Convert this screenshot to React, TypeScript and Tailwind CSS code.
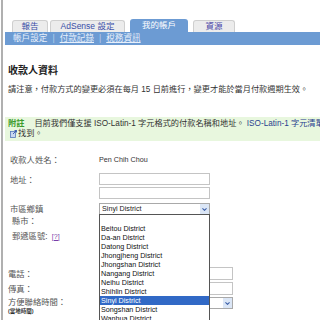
import { ChevronDown } from 'lucide-react';

const districts = [
  '',
  'Beitou District',
  'Da-an District',
  'Datong District',
  'Jhongjheng District',
  'Jhongshan District',
  'Nangang District',
  'Neihu District',
  'Shihlin District',
  'Sinyi District',
  'Songshan District',
  'Wanhua District',
  'Wenshan District',
];

function SelectBox({ value, width }: { value: string; width: string }) {
  return (
    <div className={`flex h-[12px] items-center border border-[#a9a9a9] bg-white ${width}`}>
      <span className="flex-1 pl-[2px] text-[7.2px] leading-none text-[#222]">{value}</span>
      <span className="flex h-[10px] w-[9px] items-center justify-center bg-[#dbe6f6]">
        <ChevronDown className="h-[7px] w-[7px] text-[#3b5fa8]" strokeWidth={3.5} />
      </span>
    </div>
  );
}

function Label({ children }: { children: React.ReactNode }) {
  return <div className="w-[94px] shrink-0 pl-[5px] text-[8.3px] text-[#555]">{children}</div>;
}

export default function App() {
  return (
    <div className="h-[320px] w-[320px] overflow-hidden bg-white font-['Liberation_Sans','Noto_Sans_CJK_TC',sans-serif]">
      <div className="ml-[1px] h-full border-l-2 border-[#b0b0b0] pl-[2px] pt-[19px]">
        {/* Tabs */}
        <div className="flex h-[13px] items-end pl-[7px] text-[8.5px] leading-none">
          <div className="flex h-[12px] w-[36px] items-center justify-center rounded-t-[3px] border border-b-0 border-[#cfcfcf] bg-[#ececec] text-[#3a4ea8]">報告</div>
          <div className="ml-[2px] flex h-[12px] w-[75px] items-center justify-center rounded-t-[3px] border border-b-0 border-[#cfcfcf] bg-[#ececec] text-[#3a4ea8]">AdSense 設定</div>
          <div className="ml-[5px] flex h-[13px] w-[58px] items-center justify-center rounded-t-[3px] bg-[#6c9bd3] text-white">我的帳戶</div>
          <div className="ml-[5px] flex h-[12px] w-[42px] items-center justify-center rounded-t-[3px] border border-b-0 border-[#cfcfcf] bg-[#ececec] text-[#4a45a8]">資源</div>
        </div>
        {/* Sub navigation */}
        <div className="flex h-[13px] w-[400px] items-center bg-[#6c9bd3] pl-[8px] text-[8.6px] leading-none text-[#e8f0fb]">
          <span>帳戶設定</span>
          <span className="mx-[5px] text-[#b8cfec]">|</span>
          <span className="underline">付款記錄</span>
          <span className="mx-[5px] text-[#b8cfec]">|</span>
          <span className="underline">稅務資訊</span>
        </div>

        <h1 className="mt-[20px] pl-[3px] text-[10px] font-bold leading-[12px] text-[#222]">收款人資料</h1>
        <p className="mt-[7px] whitespace-nowrap pl-[3px] text-[8.2px] leading-[12px] text-[#333]">
          請注意，付款方式的變更必須在每月 15 日前進行，變更才能於當月付款週期生效。
        </p>

        {/* Note box */}
        <div className="mt-[21px] h-[24px] w-[500px] bg-[#e8f7de] pl-[3px] pt-[2px] text-[8.2px] leading-[10px] text-[#333]">
          <div className="whitespace-nowrap">
            <span className="font-bold text-[#3a9a2a]">附註</span>
            <span className="ml-[10px]">目前我們僅支援 ISO-Latin-1 字元格式的付款名稱和地址。 </span>
            <span className="text-[#2a3f8f]">ISO-Latin-1 字元清單可</span>
          </div>
          <div className="flex items-center pl-[2px]">
            <svg width="7" height="8" viewBox="0 0 7 8" className="mr-[1px]">
              <rect x="0.5" y="1.5" width="5" height="6" fill="#c9d8f0" stroke="#5577bb" strokeWidth="0.8" />
              <path d="M3 4 L6.5 0.5 M4.5 0.5 H6.5 V2.5" stroke="#3355aa" strokeWidth="0.9" fill="none" />
            </svg>
            <span>找到。</span>
          </div>
        </div>

        {/* Form */}
        <div className="text-[8.3px] leading-[14px]">
          <div className="mt-[12px] flex h-[14px] items-center">
            <Label>收款人姓名：</Label>
            <span className="text-[7.2px] text-[#333]">Pen Chih Chou</span>
          </div>

          <div className="mt-[6px] flex">
            <Label>地址：</Label>
            <div className="flex flex-col gap-[2px]">
              <div className="h-[12px] w-[111px] border border-[#c4c4c4] bg-white" />
              <div className="h-[12px] w-[111px] border border-[#c4c4c4] bg-white" />
            </div>
          </div>

          <div className="mt-[4px] flex h-[12px] items-center">
            <Label>市區鄉鎮</Label>
            <div className="relative z-10">
              <SelectBox value="Sinyi District" width="w-[111px]" />
              {/* Open dropdown list */}
              <div className="absolute left-0 top-[11px] w-[111px] border border-[#555] bg-white text-[7.2px] leading-[9px] text-[#111]">
                {districts.map((d) => (
                  <div
                    key={d || 'blank'}
                    className={`h-[9px] whitespace-nowrap pl-[1px] ${d === 'Sinyi District' ? 'bg-[#3169c6] text-white' : ''}`}
                  >
                    {d}
                  </div>
                ))}
              </div>
            </div>
          </div>

          <div className="flex h-[12px] items-center">
            <div className="w-[94px] shrink-0 pl-[7px] text-[8.3px] text-[#555]">縣市：</div>
          </div>

          <div className="mt-[3px] flex h-[12px] items-center">
            <div className="w-[94px] shrink-0 pl-[7px] text-[8.3px] text-[#555]">
              郵遞區號: <span className="ml-[2px] text-[7px] text-[#7a3fa8] underline">[?]</span>
            </div>
          </div>

          <div className="mt-[25px] flex h-[13px] items-center">
            <div className="w-[94px] shrink-0 pl-[3px] text-[8.3px] text-[#555]">電話：</div>
            <div className="h-[13px] w-[134px] border border-[#c4c4c4] bg-white" />
          </div>

          <div className="mt-[2px] flex h-[13px] items-center">
            <div className="w-[94px] shrink-0 pl-[3px] text-[8.3px] text-[#555]">傳真：</div>
            <div className="h-[13px] w-[134px] border border-[#c4c4c4] bg-white" />
          </div>

          <div className="mt-[2px] flex">
            <div className="w-[94px] shrink-0 pl-[3px] text-[#555]">
              <div className="text-[8.3px] leading-[10px]">方便聯絡時間：</div>
              <div className="text-[5.5px] font-bold leading-[8px] text-[#333]">(當地時間)</div>
            </div>
            <SelectBox value="" width="w-[134px]" />
          </div>
        </div>
      </div>
    </div>
  );
}
